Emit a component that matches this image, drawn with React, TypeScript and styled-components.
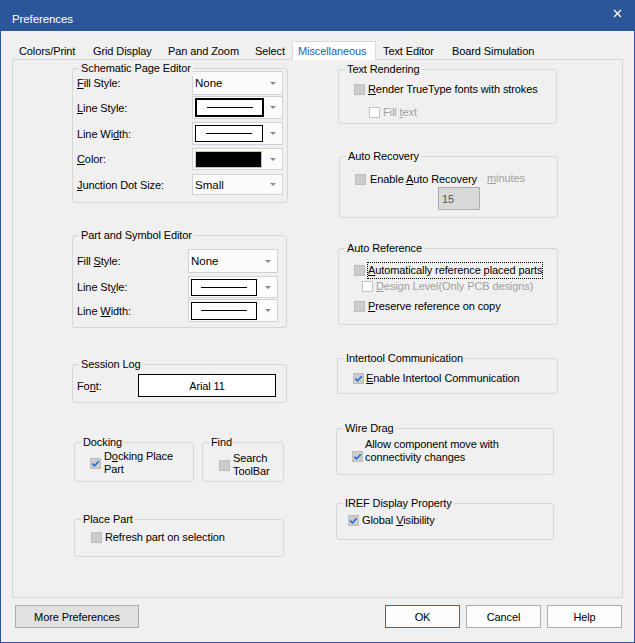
import styled, { createGlobalStyle } from "styled-components";

const GlobalStyle = createGlobalStyle`
  html, body {
    margin: 0;
    padding: 0;
    background: #f0f0f0;
  }
  body {
    font-family: "Liberation Sans", Arial, sans-serif;
    font-size: 11px;
    letter-spacing: -0.1px;
    color: #000;
  }
`;

const Window = styled.div`
  width: 635px;
  height: 643px;
  box-sizing: border-box;
  border: 1px solid #2b579a;
  background: #f0f0f0;
  display: flex;
  flex-direction: column;
`;

const TitleBar = styled.div`
  height: 30px;
  flex: none;
  background: #2b579a;
  color: #fff;
  display: flex;
  align-items: flex-start;
  justify-content: space-between;
  padding: 0 12px 0 11px;
`;

const Title = styled.span`
  margin-top: 11px;
  line-height: 15px;
  font-size: 11.5px;
`;

const Close = styled.svg`
  margin-top: 8px;
`;

const TabStrip = styled.div`
  height: 28px;
  flex: none;
  display: flex;
  align-items: flex-end;
  padding-left: 11px;
`;

const Tab = styled.div<{ $w: number; $active?: boolean }>`
  position: relative;
  z-index: 1;
  box-sizing: border-box;
  width: ${(p) => p.$w}px;
  height: 19px;
  margin-bottom: -1px;
  padding-left: ${(p) => (p.$active ? 5 : 6)}px;
  line-height: 18px;
  white-space: nowrap;
  color: ${(p) => (p.$active ? "#1f63c6" : "#000")};
  background: ${(p) => (p.$active ? "#fff" : "transparent")};
  border: 1px solid ${(p) => (p.$active ? "#d9d9d9" : "transparent")};
  border-bottom: none;
`;

const Panel = styled.div`
  margin: 0 11px;
  height: 539px;
  flex: none;
  box-sizing: border-box;
  border: 1px solid #d6d6d6;
  padding: 8px 0 0 59px;
  display: grid;
  grid-template-columns: 216px 222px;
  column-gap: 48px;
  align-items: start;
`;

const Column = styled.div`
  display: flex;
  flex-direction: column;
  align-items: flex-start;
`;

const Group = styled.div<{ $w: number; $h: number; $mt?: number; $ml?: number; $pad: string }>`
  position: relative;
  box-sizing: border-box;
  width: ${(p) => p.$w}px;
  height: ${(p) => p.$h}px;
  margin-top: ${(p) => p.$mt ?? 0}px;
  margin-left: ${(p) => p.$ml ?? 0}px;
  padding: ${(p) => p.$pad};
  border: 1px solid #d7d7d7;
  border-radius: 3px;
  display: flex;
  flex-direction: column;
  align-items: flex-start;
`;

const GroupTitle = styled.span`
  position: absolute;
  top: -8px;
  left: 6px;
  padding: 0 2px;
  line-height: 15px;
  background: #f0f0f0;
  white-space: nowrap;
`;

const GroupRow = styled.div<{ $mt: number; $ml: number }>`
  display: flex;
  gap: 8px;
  margin-top: ${(p) => p.$mt}px;
  margin-left: ${(p) => p.$ml}px;
`;

const FieldRow = styled.div<{ $label: number; $field: number; $h: number; $mt?: number }>`
  display: grid;
  grid-template-columns: ${(p) => p.$label}px ${(p) => p.$field}px;
  height: ${(p) => p.$h}px;
  margin-top: ${(p) => p.$mt ?? 0}px;
  align-items: center;
`;

const Label = styled.span`
  white-space: nowrap;
`;

const Key = styled.span`
  text-decoration: underline;
  text-underline-offset: 1px;
`;

const Combo = styled.div`
  height: 100%;
  box-sizing: border-box;
  border: 1px solid #d2d2d2;
  background: #fcfcfc;
  display: flex;
  align-items: center;
  padding: 0 6px 0 2px;
`;

const ComboText = styled.span`
  font-size: 11.5px;
  letter-spacing: 0;
`;

const Swatch = styled.div<{ $w: number; $h: number; $fill?: string; $edge: string; $bw?: number }>`
  box-sizing: border-box;
  width: ${(p) => p.$w}px;
  height: ${(p) => p.$h}px;
  border: ${(p) => p.$bw ?? 1}px solid ${(p) => p.$edge};
  background: ${(p) => p.$fill ?? "#fff"};
  display: flex;
  align-items: center;
  justify-content: center;
`;

const Stroke = styled.div`
  width: 46px;
  height: 1px;
  background: #000;
`;

const Arrow = styled.span`
  margin-left: auto;
  width: 0;
  height: 0;
  border-left: 3px solid transparent;
  border-right: 3px solid transparent;
  border-top: 3px solid #8a8a8a;
`;

const FontBox = styled.div`
  height: 100%;
  box-sizing: border-box;
  border: 1px solid #000;
  background: #fff;
  display: flex;
  align-items: center;
  justify-content: center;
`;

const CheckRow = styled.div<{ $mt?: number; $ml?: number; $gap?: number; $top?: boolean }>`
  display: flex;
  align-items: ${(p) => (p.$top ? "flex-start" : "center")};
  gap: ${(p) => p.$gap ?? 3}px;
  margin-top: ${(p) => p.$mt ?? 0}px;
  margin-left: ${(p) => p.$ml ?? 0}px;
  line-height: 15px;
  white-space: nowrap;
`;

const Box = styled.span<{ $white?: boolean; $mt?: number }>`
  flex: none;
  box-sizing: border-box;
  width: 11px;
  height: 11px;
  margin-top: ${(p) => p.$mt ?? 0}px;
  border: 1px solid ${(p) => (p.$white ? "#c6c6c6" : "#bdbdbd")};
  background: ${(p) => (p.$white ? "#fff" : "#cccccc")};
  display: flex;
  align-items: center;
  justify-content: center;
`;

const CheckText = styled.span<{ $muted?: boolean; $lh?: number }>`
  color: ${(p) => (p.$muted ? "#a0a0a0" : "#000")};
  line-height: ${(p) => p.$lh ?? 15}px;
`;

const FocusText = styled.span`
  border: 1px dotted #000;
  line-height: 15px;
`;

const RecoveryRow = styled.div`
  display: grid;
  grid-template-columns: 132px auto;
  align-items: center;
  line-height: 15px;
  white-space: nowrap;
`;

const Minutes = styled.span`
  color: #a0a0a0;
  margin-top: -2px;
`;

const NumberBox = styled.div`
  box-sizing: border-box;
  width: 42px;
  height: 23px;
  margin-left: 83px;
  padding-left: 3px;
  border: 1px solid #adadad;
  background: #d9d9d9;
  color: #555;
  display: flex;
  align-items: center;
`;

const ButtonBar = styled.div`
  display: flex;
  gap: 6px;
  padding: 7px 12px 0 14px;
`;

const Button = styled.div<{ $w: number; $primary?: boolean; $dark?: boolean }>`
  box-sizing: border-box;
  width: ${(p) => p.$w}px;
  height: 23px;
  border: 1px solid ${(p) => (p.$primary ? "#0078d7" : "#adadad")};
  background: ${(p) => (p.$dark ? "#e1e1e1" : "#fdfdfd")};
  display: flex;
  align-items: center;
  justify-content: center;
  &:first-child {
    margin-right: auto;
  }
`;

function Check({ on, white, mt }: { on?: boolean; white?: boolean; mt?: number }) {
  return (
    <Box $white={white} $mt={mt}>
      {on && (
        <svg width="9" height="9" viewBox="0 0 9 9">
          <path d="M1.3 4.6 L3.5 6.8 L7.8 2.2" fill="none" stroke="#1d6fd8" strokeWidth="1.5" />
        </svg>
      )}
    </Box>
  );
}

const tabs = [
  { label: "Colors/Print", w: 74 },
  { label: "Grid Display", w: 75 },
  { label: "Pan and Zoom", w: 87 },
  { label: "Select", w: 44 },
  { label: "Miscellaneous", w: 84, active: true },
  { label: "Text Editor", w: 69 },
  { label: "Board Simulation", w: 110 },
];

export default function App() {
  return (
    <>
      <GlobalStyle />
      <Window>
        <TitleBar>
          <Title>Preferences</Title>
          <Close width="9" height="9" viewBox="0 0 9 9">
            <path d="M1 1 L8 8 M8 1 L1 8" stroke="#fff" strokeWidth="1.3" />
          </Close>
        </TitleBar>

        <TabStrip>
          {tabs.map((t) => (
            <Tab key={t.label} $w={t.w} $active={t.active}>
              {t.label}
            </Tab>
          ))}
        </TabStrip>

        <Panel>
          <Column>
            <Group $w={216} $h={135} $pad="2px 0 0 4px">
              <GroupTitle>Schematic Page Editor</GroupTitle>
              <FieldRow $label={115} $field={91} $h={24}>
                <Label><Key>F</Key>ill Style:</Label>
                <Combo>
                  <ComboText>None</ComboText>
                  <Arrow />
                </Combo>
              </FieldRow>
              <FieldRow $label={115} $field={91} $h={23} $mt={1}>
                <Label><Key>L</Key>ine Style:</Label>
                <Combo>
                  <Swatch $w={69} $h={19} $edge="#000" $bw={2}>
                    <Stroke />
                  </Swatch>
                  <Arrow />
                </Combo>
              </FieldRow>
              <FieldRow $label={115} $field={91} $h={23} $mt={3}>
                <Label>Line Wi<Key>d</Key>th:</Label>
                <Combo>
                  <Swatch $w={68} $h={17} $edge="#000">
                    <Stroke />
                  </Swatch>
                  <Arrow />
                </Combo>
              </FieldRow>
              <FieldRow $label={115} $field={91} $h={22} $mt={3}>
                <Label><Key>C</Key>olor:</Label>
                <Combo>
                  <Swatch $w={67} $h={17} $edge="#f4b48c" $fill="#000" />
                  <Arrow />
                </Combo>
              </FieldRow>
              <FieldRow $label={115} $field={91} $h={21} $mt={4}>
                <Label><Key>J</Key>unction Dot Size:</Label>
                <Combo>
                  <ComboText>Small</ComboText>
                  <Arrow />
                </Combo>
              </FieldRow>
            </Group>

            <Group $w={215} $h={93} $mt={32} $pad="13px 0 0 4px">
              <GroupTitle>Part and Symbol Editor</GroupTitle>
              <FieldRow $label={111} $field={90} $h={24}>
                <Label>Fill <Key>S</Key>tyle:</Label>
                <Combo>
                  <ComboText>None</ComboText>
                  <Arrow />
                </Combo>
              </FieldRow>
              <FieldRow $label={111} $field={90} $h={22} $mt={3}>
                <Label>Line St<Key>y</Key>le:</Label>
                <Combo>
                  <Swatch $w={66} $h={17} $edge="#000">
                    <Stroke />
                  </Swatch>
                  <Arrow />
                </Combo>
              </FieldRow>
              <FieldRow $label={111} $field={90} $h={23} $mt={1}>
                <Label>Line <Key>W</Key>idth:</Label>
                <Combo>
                  <Swatch $w={66} $h={18} $edge="#000">
                    <Stroke />
                  </Swatch>
                  <Arrow />
                </Combo>
              </FieldRow>
            </Group>

            <Group $w={215} $h={39} $mt={36} $pad="9px 0 0 4px">
              <GroupTitle>Session Log</GroupTitle>
              <FieldRow $label={61} $field={138} $h={23}>
                <Label>Fo<Key>n</Key>t:</Label>
                <FontBox>Arial 11</FontBox>
              </FieldRow>
            </Group>

            <GroupRow $mt={39} $ml={2}>
              <Group $w={120} $h={40} $pad="7px 0 0 15px">
                <GroupTitle>Docking</GroupTitle>
                <CheckRow>
                  <Check on />
                  <CheckText $lh={13}>
                    D<Key>o</Key>cking Place
                    <br />
                    Part
                  </CheckText>
                </CheckRow>
              </Group>
              <Group $w={82} $h={40} $pad="9px 0 0 16px">
                <GroupTitle>Find</GroupTitle>
                <CheckRow>
                  <Check />
                  <CheckText $lh={13}>
                    Search
                    <br />
                    ToolBar
                  </CheckText>
                </CheckRow>
              </Group>
            </GroupRow>

            <Group $w={210} $h={38} $mt={37} $ml={2} $pad="10px 0 0 16px">
              <GroupTitle>Place Part</GroupTitle>
              <CheckRow>
                <Check />
                <CheckText>Refresh part on selection</CheckText>
              </CheckRow>
            </Group>
          </Column>

          <Column>
            <Group $w={219} $h={55} $mt={1} $ml={2} $pad="12px 0 0 15px">
              <GroupTitle>Text Rendering</GroupTitle>
              <CheckRow>
                <Check />
                <CheckText><Key>R</Key>ender TrueType fonts with strokes</CheckText>
              </CheckRow>
              <CheckRow $mt={8} $ml={15}>
                <Check white />
                <CheckText $muted>Fill <Key>t</Key>ext</CheckText>
              </CheckRow>
            </Group>

            <Group $w={219} $h={62} $mt={32} $ml={3} $pad="15px 0 0 15px">
              <GroupTitle>Auto Recovery</GroupTitle>
              <RecoveryRow>
                <CheckRow $gap={4}>
                  <Check />
                  <CheckText>Enable <Key>A</Key>uto Recovery</CheckText>
                </CheckRow>
                <Minutes><Key>m</Key>inutes</Minutes>
              </RecoveryRow>
              <NumberBox>15</NumberBox>
            </Group>

            <Group $w={220} $h={77} $mt={30} $ml={2} $pad="13px 0 0 15px">
              <GroupTitle>Auto Reference</GroupTitle>
              <CheckRow $gap={2}>
                <Check />
                <FocusText><Key>A</Key>utomatically reference placed parts</FocusText>
              </CheckRow>
              <CheckRow $ml={8}>
                <Check white />
                <CheckText $muted><Key>D</Key>esign Level(Only PCB designs)</CheckText>
              </CheckRow>
              <CheckRow $mt={5}>
                <Check />
                <CheckText><Key>P</Key>reserve reference on copy</CheckText>
              </CheckRow>
            </Group>

            <Group $w={221} $h={36} $mt={33} $ml={1} $pad="12px 0 0 15px">
              <GroupTitle>Intertool Communication</GroupTitle>
              <CheckRow $gap={2}>
                <Check on />
                <CheckText><Key>E</Key>nable Intertool Communication</CheckText>
              </CheckRow>
            </Group>

            <Group $w={218} $h={47} $mt={34} $pad="9px 0 0 15px">
              <GroupTitle>Wire Drag</GroupTitle>
              <CheckRow $gap={2} $top>
                <Check on mt={13} />
                <CheckText $lh={13}>
                  Allow component move with
                  <br />
                  connectivity chan<Key>g</Key>es
                </CheckText>
              </CheckRow>
            </Group>

            <Group $w={218} $h={37} $mt={28} $pad="9px 0 0 11px">
              <GroupTitle>IREF Display Property</GroupTitle>
              <CheckRow>
                <Check on />
                <CheckText>Global <Key>V</Key>isibility</CheckText>
              </CheckRow>
            </Group>
          </Column>
        </Panel>

        <ButtonBar>
          <Button $w={124} $dark>More Preferences</Button>
          <Button $w={75} $primary>OK</Button>
          <Button $w={75}>Cancel</Button>
          <Button $w={75}>Help</Button>
        </ButtonBar>
      </Window>
    </>
  );
}
